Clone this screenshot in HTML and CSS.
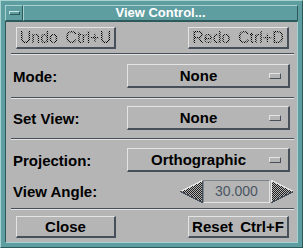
FILE: index.html
```html
<!DOCTYPE html>
<html>
<head>
<meta charset="utf-8">
<link rel="stylesheet" href="styles.css">
</head>
<body>
<div class="frame">
  <div class="titlebar">
    <div class="menu-btn"><span class="menu-bar"></span></div>
    <div class="title">View Control...</div>
  </div>
  <div class="client">
    <div class="row top-row">
      <div class="btn cmd"><span class="stipple">Undo Ctrl+U</span></div>
      <div class="btn cmd"><span class="stipple">Redo Ctrl+D</span></div>
    </div>
    <div class="sep sep1"></div>
    <div class="row opt-row r-mode">
      <span class="label">Mode:</span>
      <div class="btn opt"><span class="opt-text">None</span><span class="ind"></span></div>
    </div>
    <div class="sep sep2"></div>
    <div class="row opt-row r-view">
      <span class="label">Set View:</span>
      <div class="btn opt"><span class="opt-text">None</span><span class="ind"></span></div>
    </div>
    <div class="sep sep3"></div>
    <div class="row opt-row r-proj">
      <span class="label">Projection:</span>
      <div class="btn opt"><span class="opt-text">Orthographic</span><span class="ind"></span></div>
    </div>
    <div class="row angle-row">
      <span class="label">View Angle:</span>
      <div class="spin">
        <svg class="arrow" width="23" height="23" viewBox="0 0 23 23" shape-rendering="crispEdges">
          <defs>
            <pattern id="ck" width="2" height="2" patternUnits="userSpaceOnUse">
              <rect width="2" height="2" fill="#b5b5b5"/>
              <rect width="1" height="1" fill="#1e1e1e"/>
              <rect x="1" y="1" width="1" height="1" fill="#1e1e1e"/>
            </pattern>
          </defs>
          <polygon points="0.5,11.5 22.5,0.5 22.5,22.5" fill="url(#ck)"/>
          <polyline points="0.5,11.5 22.5,0.5" fill="none" stroke="#e6e6e6" stroke-width="1"/>
          <polyline points="0.5,11.5 22.5,22.5 22.5,0.5" fill="none" stroke="#47505a" stroke-width="1"/>
        </svg>
        <div class="field">30.000</div>
        <svg class="arrow" width="23" height="23" viewBox="0 0 23 23" shape-rendering="crispEdges">
          <polygon points="22.5,11.5 0.5,0.5 0.5,22.5" fill="url(#ck)"/>
          <polyline points="0.5,22.5 0.5,0.5 22.5,11.5" fill="none" stroke="#e6e6e6" stroke-width="1"/>
          <polyline points="22.5,11.5 0.5,22.5" fill="none" stroke="#47505a" stroke-width="1"/>
        </svg>
      </div>
    </div>
    <div class="sep sep4"></div>
    <div class="row bottom-row">
      <div class="btn cmd bold">Close</div>
      <div class="btn cmd bold reset">Reset Ctrl+F</div>
    </div>
  </div>
</div>
</body>
</html>
```
FILE: styles.css
```css
* { box-sizing: border-box; }
html, body { margin: 0; padding: 0; }
body {
  width: 303px;
  height: 248px;
  overflow: hidden;
  font-family: "Liberation Sans", Arial, sans-serif;
  background: #5f9ea0;
}
.frame {
  width: 303px;
  height: 248px;
  background: #5f9ea0;
  border: 1px solid;
  border-color: #a6d3d2 #2c5a5b #2c5a5b #a6d3d2;
  padding: 4px;
  display: flex;
  flex-direction: column;
}
.titlebar {
  height: 16px;
  display: flex;
  flex: none;
}
.menu-btn {
  width: 18px;
  height: 16px;
  border: 1px solid;
  border-color: #a6d3d2 #2c5a5b #2c5a5b #a6d3d2;
  display: flex;
  align-items: center;
  justify-content: center;
}
.menu-bar {
  width: 11px;
  height: 4px;
  border: 1px solid;
  border-color: #c5e6e5 #2c5a5b #2c5a5b #c5e6e5;
}
.title {
  flex: 1;
  height: 16px;
  border: 1px solid;
  border-color: #a6d3d2 #2c5a5b #2c5a5b #a6d3d2;
  color: #ffffff;
  font-weight: bold;
  font-size: 13px;
  line-height: 14px;
  text-align: center;
}
.client {
  flex: 1;
  background: #b5b5b5;
  border-top: 1px solid #2c5a5b;
  border-left: 1px solid #2c5a5b;
  border-bottom: 1px solid #a6d3d2;
  border-right: 1px solid #a6d3d2;
  padding: 5px 7px 0 7px;
  display: flex;
  flex-direction: column;
}
.row {
  display: flex;
  align-items: center;
  justify-content: space-between;
  flex: none;
}
.btn {
  border: solid;
  border-width: 1px 2px 2px 1px;
  border-color: #e4e4e4 #47505a #47505a #e4e4e4;
  background: #b5b5b5;
  display: flex;
  align-items: center;
  justify-content: center;
  color: #000;
}
.top-row { height: 22px; padding: 0 1px 0 3px; }
.cmd { width: 100px; height: 22px; font-size: 16px; }
.cmd:last-child { width: 101px; }
.stipple {
  word-spacing: 3px;
  color: transparent;
  background: conic-gradient(#000 25%, transparent 0 50%, #000 0 75%, transparent 0) 0 0 / 2px 2px;
  -webkit-background-clip: text;
  background-clip: text;
  line-height: 18px;
}
.sep {
  height: 2px;
  border-top: 1px solid #47505a;
  border-bottom: 1px solid #e4e4e4;
  margin: 0 -4px 0 -2px;
  flex: none;
}
.sep1 { margin-top: 4px; }
.opt-row { height: 24px; }
.r-mode { margin-top: 9px; }
.sep2 { margin-top: 9px; }
.r-view { margin-top: 7px; }
.sep3 { margin-top: 8px; }
.r-proj { margin-top: 8px; }
.label {
  font-weight: bold;
  font-size: 15px;
  color: #000;
}
.opt {
  width: 163px;
  height: 24px;
  padding-right: 7px;
  font-weight: bold;
  font-size: 15px;
}
.opt-text { flex: 1; text-align: center; }
.ind {
  width: 12px;
  height: 6px;
  border: 1px solid;
  border-color: #e4e4e4 #47505a #47505a #e4e4e4;
  flex: none;
}
.angle-row { height: 23px; margin-top: 8px; }
.spin {
  display: flex;
  align-items: center;
  margin-right: -4px;
}
.arrow { display: block; flex: none; }
.field {
  width: 67px;
  height: 23px;
  margin-right: 1px;
  border: 1px solid;
  border-color: #7c848c #e4e4e4 #e4e4e4 #7c848c;
  color: #4a5563;
  font-size: 14px;
  text-align: center;
  line-height: 21px;
}
.sep4 { margin-top: 5px; }
.bottom-row { height: 22px; margin-top: 6px; padding: 0 1px 0 3px; }
.bold { font-weight: bold; font-size: 15px; }
.reset { word-spacing: 3px; }
```
